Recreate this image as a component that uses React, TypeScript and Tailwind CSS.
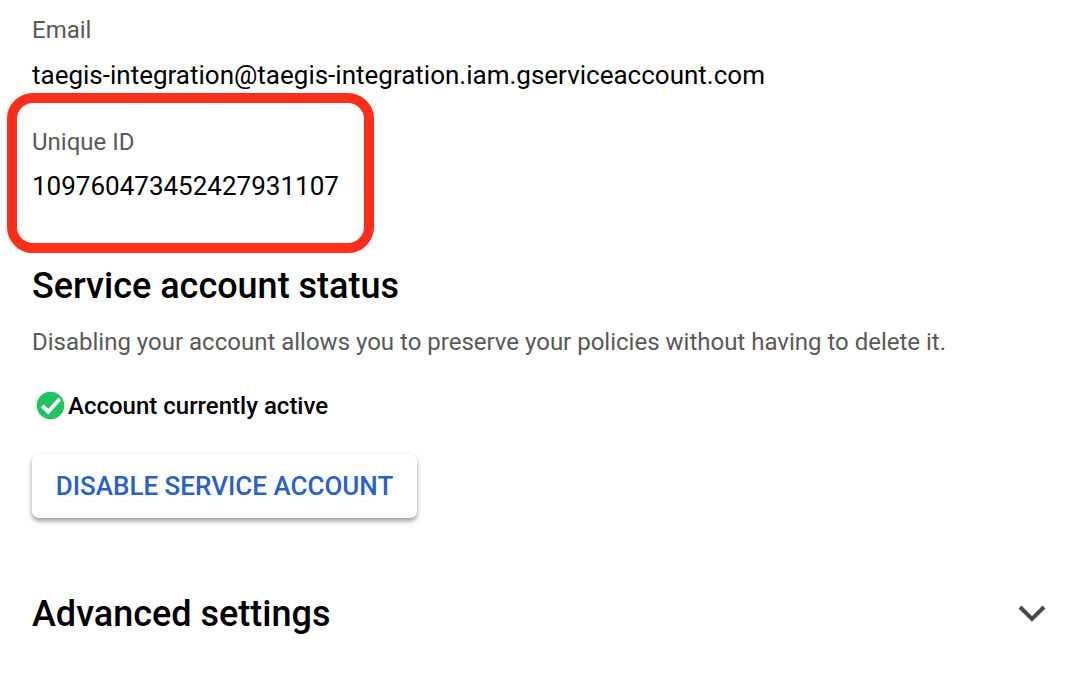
import React from 'react';

const App: React.FC = () => {
    return (
        <div className="relative w-[1092px] h-[696px] overflow-hidden bg-white pl-8 pr-[45px] font-['Roboto',sans-serif]">
            {/* Email */}
            <div className="pt-[16px]">
                <p className="text-[24px] leading-[28px] text-[#595959]">Email</p>
                <p className="mt-[17px] text-[26px] leading-[28px] text-black">taegis-integration@taegis-integration.iam.gserviceaccount.com</p>
            </div>
            {/* Unique ID */}
            <div className="mt-[39px]">
                <p className="text-[24px] leading-[28px] text-[#595959]">Unique ID</p>
                <p className="mt-[16px] text-[26px] leading-[28px] text-black">109760473452427931107</p>
            </div>
            {/* Status */}
            <h2 className="mt-[66px] text-[36px] leading-[40px] font-medium text-black">Service account status</h2>
            <p className="mt-[22px] text-[24px] leading-[28px] text-[#595959]">Disabling your account allows you to preserve your policies without having to delete it.</p>
            <div className="mt-[33px] flex items-center gap-px">
                <svg width="33" height="33" viewBox="0 0 24 24" className="ml-[2px] shrink-0">
                    <circle cx="12" cy="12" r="10" fill="#22c35e" />
                    <path d="M6 12.3l4.4 4.2 8.4-9.4" fill="none" stroke="#fff" strokeWidth="2.8" />
                </svg>
                <span className="text-[24px] leading-[28px] font-medium text-black">Account currently active</span>
            </div>
            <button className="mt-[32px] flex h-[64px] w-[385px] items-center justify-center rounded-[7px] bg-white text-[26px] font-medium text-[#2b5fc9] shadow-[0_3px_5px_rgba(0,0,0,0.4)]">DISABLE SERVICE ACCOUNT</button>
            {/* Advanced settings */}
            <div className="mt-[76px] flex items-center justify-between">
                <h2 className="text-[36px] leading-[40px] font-medium text-black">Advanced settings</h2>
                <svg width="30" height="20" viewBox="0 0 30 20">
                    <path d="M3 3l12 12L27 3" fill="none" stroke="#4a4a4a" strokeWidth="4" />
                </svg>
            </div>
            {/* Red annotation box */}
            <div className="absolute left-[7px] top-[93px] h-[160px] w-[367px] rounded-[26px] border-[10px] border-[#ff2d1c]" />
        </div>
    );
};

export default App;
